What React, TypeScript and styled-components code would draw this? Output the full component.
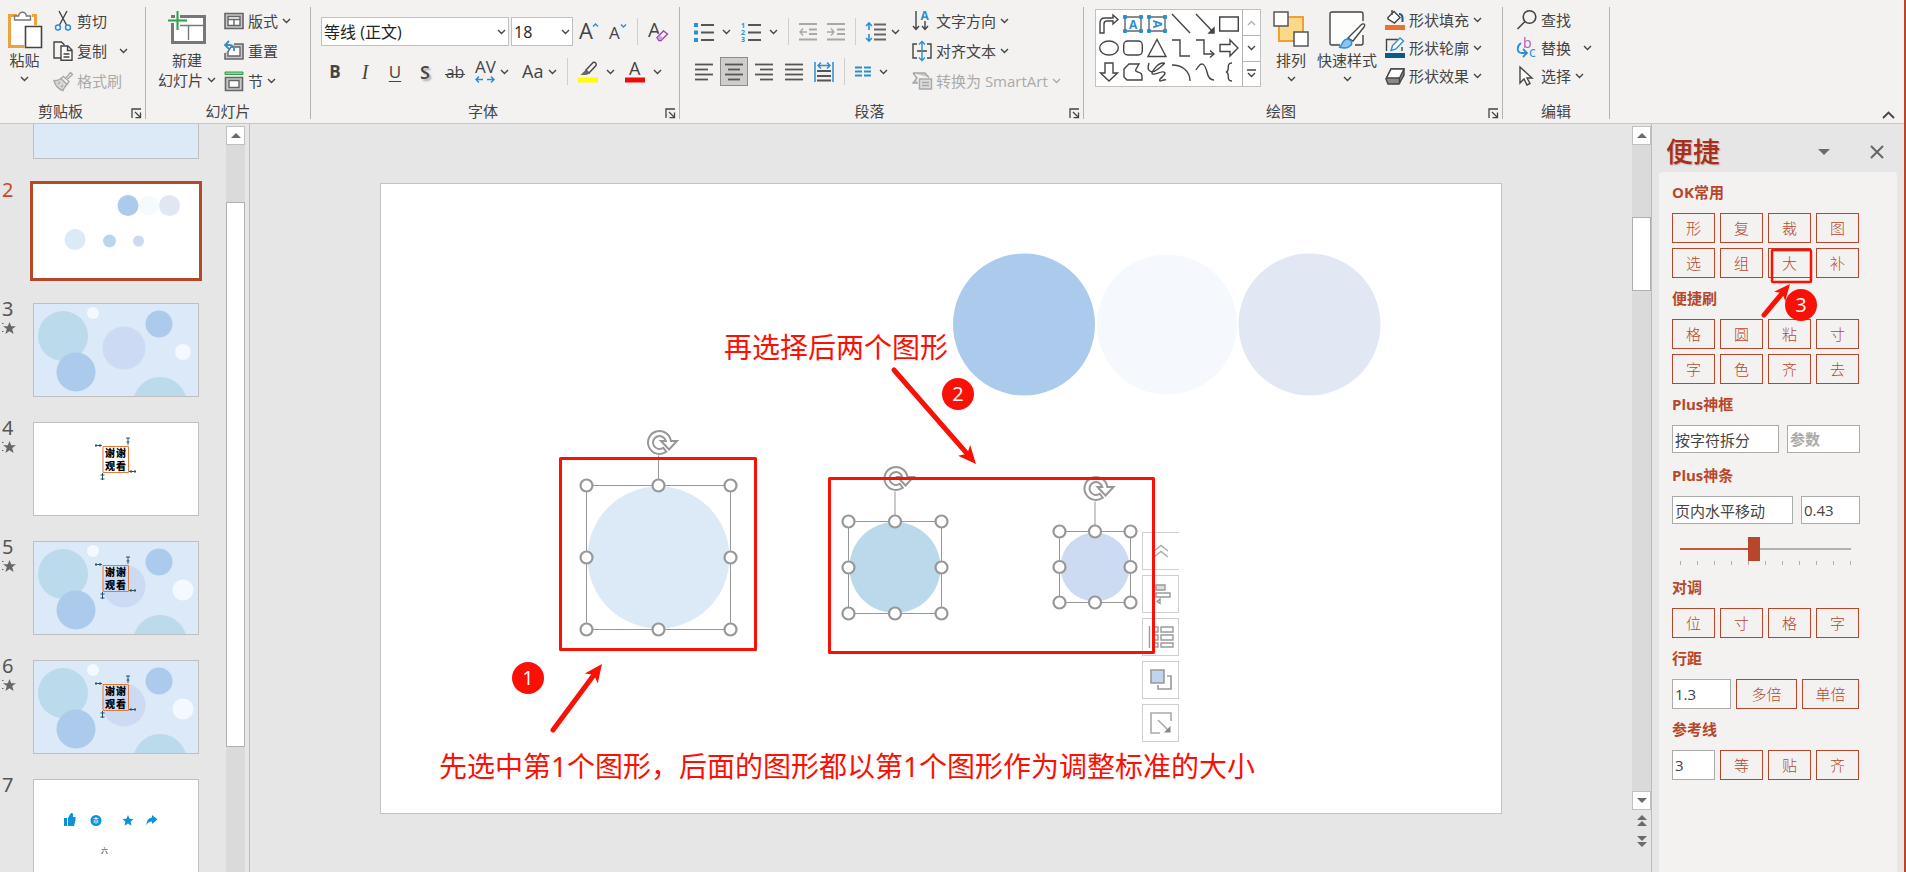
import React, { useState } from 'react';
import styled, { createGlobalStyle, css } from 'styled-components';

const ink = '#444444';
const accent = '#b7472a';
const blue = '#2b8fd0';
const mark = '#fb1006';

const GlobalStyle = createGlobalStyle`
  *, *::before, *::after { box-sizing: border-box; }
  body {
    margin: 0;
    overflow: hidden;
    background: #e6e6e6;
    color: ${ink};
    font: 15px/20px "Open Sans", "Noto Sans CJK SC", sans-serif;
  }
  button, input, select { font: inherit; color: inherit; }
  button { padding: 0; border: 0; background: none; cursor: pointer; white-space: nowrap; }
  svg { display: block; flex: none; overflow: visible; }
`;

const Shell = styled.div`
  display: flex;
  flex-direction: column;
  height: 100vh;
  border-right: 2px solid ${accent};
`;

/* ---------- Ribbon ---------- */

const RibbonBar = styled.header`
  display: flex;
  flex: none;
  padding: 7px 0 4px;
  background: #f3f2f1;
  border-bottom: 1px solid #c8c6c4;
`;

const GroupBox = styled.section<{ $width: number }>`
  flex: none;
  display: flex;
  flex-direction: column;
  width: ${p => p.$width}px;
  border-right: 1px solid #b5b3b1;
`;

const GroupBody = styled.div<{ $pad: number }>`
  display: flex;
  height: 96px;
  padding-left: ${p => p.$pad}px;
`;

const GroupFooter = styled.div<{ $launcher?: boolean }>`
  position: relative;
  height: 16px;
  padding-right: ${p => (p.$launcher ? 24 : 0)}px;
  line-height: 16px;
  text-align: center;
`;

const Launcher = styled.button`
  position: absolute;
  right: 3px;
  top: 5px;
`;

const BigButton = styled.button<{ $width: number }>`
  display: flex;
  flex-direction: column;
  align-items: center;
  width: ${p => p.$width}px;
  height: 84px;
  padding-top: 4px;
  line-height: 20px;
  & > svg:last-child { margin-top: 6px; }
`;

const BigIcon = styled.span`
  display: block;
  height: 39px;
`;

const WithChevron = styled.span`
  display: flex;
  align-items: center;
  gap: 4px;
`;

const MenuColumn = styled.div<{ $row: number }>`
  display: grid;
  grid-auto-rows: ${p => p.$row}px;
  align-content: start;
  justify-items: start;
`;

const MenuButton = styled.button<{ $wide?: boolean }>`
  display: flex;
  align-items: center;
  gap: 4px;
  padding: 0 4px 2px;
  & > svg:last-child { margin-left: ${p => (p.$wide ? 8 : 0)}px; }
  &:disabled { color: #aaaaaa; }
`;

const ToolRows = styled.div<{ $width?: number }>`
  display: flex;
  flex-direction: column;
  gap: 11px;
  padding-top: 10px;
  ${p => p.$width && css`width: ${p.$width}px;`}
`;

const ToolRow = styled.div`
  display: flex;
  align-items: center;
  gap: 2px;
  height: 29px;
`;

const Tool = styled.button<{ $gap?: number }>`
  display: flex;
  align-items: center;
  gap: ${p => p.$gap ?? 8}px;
  height: 29px;
  padding: 0 4px;
  &:disabled { opacity: 0.6; }
`;

const ToggleTool = styled.button<{ $on?: boolean }>`
  display: grid;
  place-items: center;
  width: 28px;
  height: 29px;
  border: 1px solid ${p => (p.$on ? '#8c8c8c' : 'transparent')};
  background: ${p => (p.$on ? '#cfcdcb' : 'none')};
`;

const Letter = styled.span<{ $kind: 'b' | 'i' | 'u' | 's' | 'ab' }>`
  font-size: 17px;
  line-height: 20px;
  ${p => p.$kind === 'b' && css`font-weight: 700;`}
  ${p => p.$kind === 'i' && css`font-family: "Liberation Serif", serif; font-style: italic; font-size: 20px;`}
  ${p => p.$kind === 'u' && css`text-decoration: underline; text-underline-offset: 3px;`}
  ${p => p.$kind === 's' && css`font-size: 18px; font-weight: 600; text-shadow: 2px 2px 2px #aaa;`}
  ${p => p.$kind === 'ab' && css`
    padding: 0 1px;
    font-size: 16px;
    background: linear-gradient(${ink}, ${ink}) center 12px / 100% 1px no-repeat;
  `}
`;

const Divider = styled.span`
  width: 1px;
  height: 27px;
  margin: 0 4px;
  background: #d0cecc;
`;

const Combo = styled.label<{ $width: number }>`
  position: relative;
  display: block;
  width: ${p => p.$width}px;
  height: 29px;
  & > svg { position: absolute; right: 3px; top: 12px; pointer-events: none; }
`;

const ComboSelect = styled.select`
  appearance: none;
  width: 100%;
  height: 100%;
  padding: 0 2px;
  border: 1px solid #c2c0be;
  border-radius: 0;
  background: #fff;
  color: #222;
  font-size: 16px;
`;

const Gallery = styled.div`
  display: flex;
  width: 166px;
  height: 78px;
  margin: 2px 8px 0 0;
  border: 1px solid #c2c0be;
  background: #fff;
`;

const ShapeGrid = styled.div`
  flex: 1;
  display: grid;
  grid-template: repeat(3, 24px) / repeat(6, 24px);
  padding: 2px 0 0 1px;
`;

const ShapeCell = styled.button`
  display: grid;
  place-items: center;
`;

const GalleryScroll = styled.div`
  display: grid;
  grid-template-rows: repeat(3, 1fr);
  width: 18px;
  background: #fff;
  & > button { display: grid; place-items: center; border-left: 1px solid #b5b3b1; }
  & > button + button { border-top: 1px solid #b5b3b1; }
`;

const CollapseButton = styled.button`
  align-self: flex-end;
  margin: 0 9px 0 auto;
`;

/* ---------- Workspace ---------- */

const Workspace = styled.div`
  flex: 1;
  min-height: 0;
  display: flex;
`;

const ThumbPane = styled.nav`
  flex: none;
  display: flex;
  width: 250px;
  padding-right: 4px;
  border-right: 1px solid #bcbcbc;
`;

const ThumbList = styled.ol`
  flex: 1;
  display: flex;
  flex-direction: column;
  gap: 25px;
  margin: 0;
  padding: 0;
  list-style: none;
  overflow: hidden;
`;

const ThumbItem = styled.li`
  flex: none;
  display: flex;
`;

const ThumbInfo = styled.div<{ $active?: boolean }>`
  width: 33px;
  padding-left: 2px;
  font-family: "Noto Sans", sans-serif;
  font-size: 20px;
  line-height: 12px;
  color: ${p => (p.$active ? '#c8492c' : '#555')};
  & > svg { margin-top: 7px; }
`;

const Thumb = styled.button<{ $active?: boolean; $clipped?: boolean }>`
  display: block;
  width: 166px;
  height: ${p => (p.$clipped ? 35 : 94)}px;
  border: 1px solid #bfbfbf;
  border-top-width: ${p => (p.$clipped ? 0 : 1)}px;
  background: ${p => (p.$clipped ? '#dce9f7' : '#fff')};
  overflow: hidden;
  ${p => p.$active && css`border-color: #fff; box-shadow: 0 0 0 3px ${accent};`}
  & > svg { overflow: hidden; }
`;

const ScrollTrack = styled.div`
  flex: none;
  display: flex;
  flex-direction: column;
  width: 19px;
  padding-top: 2px;
`;

const ScrollButton = styled.button<{ $plain?: boolean }>`
  flex: none;
  display: grid;
  place-items: center;
  height: ${p => (p.$plain ? 21 : 19)}px;
  border: ${p => (p.$plain ? 0 : 1)}px solid #c0c0c0;
  background: ${p => (p.$plain ? 'none' : '#fff')};
`;

const ScrollSpace = styled.div<{ $grow: number }>`
  flex: ${p => p.$grow} 1 0;
  background: #dadada;
`;

const ScrollThumb = styled.div<{ $grow: number }>`
  flex: ${p => p.$grow} 1 0;
  border: 1px solid #b0b0b0;
  background: #fff;
`;

const ScrollFoot = styled.div`
  flex: none;
  height: 20px;
`;

const EditorPane = styled.main`
  flex: 1;
  min-width: 0;
  display: grid;
  place-items: center;
`;

const Slide = styled.div`
  position: relative;
  width: 1122px;
  height: 631px;
  border: 1px solid #c3c3c3;
  background: #fff;
`;

const SlideDrawing = styled.svg`
  position: absolute;
  left: 0;
  top: 0;
  pointer-events: none;
`;

const Note = styled.p<{ $x: number; $y: number }>`
  position: absolute;
  left: ${p => p.$x}px;
  top: ${p => p.$y}px;
  margin: 0;
  color: ${mark};
  font-family: "Noto Sans", "Noto Sans CJK SC", sans-serif;
  font-size: 28px;
  line-height: 36px;
  white-space: nowrap;
`;

const Badge = styled.span<{ $x: number; $y: number }>`
  position: absolute;
  left: ${p => p.$x}px;
  top: ${p => p.$y}px;
  z-index: 2;
  width: 32px;
  height: 32px;
  border-radius: 50%;
  background: ${mark};
  color: #fff;
  font-size: 20px;
  font-weight: 400;
  line-height: 32px;
  text-align: center;
`;

const FloatTools = styled.div`
  position: absolute;
  left: 761px;
  top: 348px;
  display: grid;
  gap: 5px;
`;

const FloatButton = styled.button<{ $open?: boolean }>`
  display: grid;
  place-items: center;
  width: 37px;
  height: 38px;
  border: 1px solid #cfcfcf;
  border-right-width: ${p => (p.$open ? 0 : 1)}px;
  background: #fff;
`;

/* ---------- Side panel ---------- */

const SidePanel = styled.aside`
  flex: none;
  display: flex;
  flex-direction: column;
  width: 253px;
  padding: 0 7px;
  border-left: 1px solid #bcbcbc;
`;

const PanelHeader = styled.div`
  display: flex;
  align-items: center;
  height: 48px;
  padding: 8px 13px 0 7px;
`;

const PanelTitle = styled.h2`
  flex: 1;
  margin: 0;
  color: #a5301f;
  font-size: 27px;
  font-weight: 500;
  line-height: 34px;
  text-shadow: 1px 1px 1px #c9a9a2;
`;

const PanelHeadButton = styled.button`
  width: 14px;
  margin-left: 38px;
`;

const PanelBody = styled.div`
  flex: 1;
  display: flex;
  flex-direction: column;
  gap: 11px;
  padding: 11px 37px 0 13px;
  border-radius: 4px 4px 0 0;
  background: #f3f2f1;
`;

const Section = styled.section`
  display: grid;
  gap: 10px;
`;

const SectionTitle = styled.h3`
  height: 20px;
  margin: 0;
  color: ${accent};
  font-size: 15px;
  font-weight: 700;
  line-height: 18px;
`;

const ButtonGrid = styled.div`
  display: grid;
  grid-template-columns: repeat(4, 43px);
  gap: 5px;
`;

const FieldRow = styled.div`
  display: flex;
  align-items: flex-start;
  gap: 5px;
  height: 30px;
`;

const PanelButton = styled.button<{ $width?: number }>`
  position: relative;
  width: ${p => p.$width ?? 43}px;
  height: 30px;
  border: 1px solid ${accent};
  color: ${accent};
  font-weight: 300;
  line-height: 26px;
`;

const Field = styled.input<{ $width: number; $tall?: boolean; $end?: boolean }>`
  width: ${p => p.$width}px;
  height: ${p => (p.$tall ? 30 : 28)}px;
  margin-left: ${p => (p.$end ? 'auto' : 0)};
  padding: 0 2px;
  border: 1px solid #ababab;
  border-radius: 0;
  background: #fff;
  &::placeholder { color: #aaa; font-weight: 700; }
`;

const SliderBox = styled.div`
  height: 41px;
  margin-top: -11px;
  padding: 11px 8px 0;
`;

const Slider = styled.input<{ $pct: number }>`
  display: block;
  appearance: none;
  width: 171px;
  height: 24px;
  margin: 0;
  background: none;
  &::-webkit-slider-runnable-track {
    height: 2px;
    background: linear-gradient(to right, #c8553a ${p => p.$pct}%, #b0b0b0 ${p => p.$pct}%);
  }
  &::-webkit-slider-thumb {
    appearance: none;
    width: 12px;
    height: 24px;
    margin-top: -11px;
    background: ${accent};
  }
`;

const Ticks = styled.div`
  display: flex;
  justify-content: space-between;
  width: 171px;
  & > i { width: 1px; height: 4px; background: #b0b0b0; }
`;

const Pointer = styled.svg`
  position: absolute;
  left: -12px;
  top: -4px;
  z-index: 1;
  pointer-events: none;
`;

/* ---------- Icons ---------- */

type IconProps = { w?: number; h?: number; children: React.ReactNode; color?: string; sw?: number };
const Icon = ({ w = 20, h = 20, color = ink, sw = 1.4, children }: IconProps) => (
  <svg width={w} height={h} viewBox={`0 0 ${w} ${h}`} fill="none" stroke={color} strokeWidth={sw} aria-hidden="true">
    {children}
  </svg>
);

const Chevron = ({ color = ink }: { color?: string }) => (
  <Icon w={9} h={6} color={color}><path d="M1 1l3.500 3.500L8 1" /></Icon>
);

const LauncherIcon = () => (
  <Icon w={11} h={11} sw={1.3}><path d="M1 10V1h9M4 4l5.500 5.500M9.500 4.500v5.200H4.500" /></Icon>
);

const G = ({ x, y, s, fill = ink, children, bold }: { x: number; y: number; s: number; fill?: string; bold?: boolean; children: string }) => (
  <text x={x} y={y} fontSize={s} fill={fill} stroke="none" fontWeight={bold ? 700 : 400} fontFamily="Open Sans, sans-serif">{children}</text>
);

const PasteIcon = () => (
  <Icon w={36} h={38}>
    <path d="M10 4.500H2.500v31H17M25 4.500h3.500V14" stroke="#eda33c" strokeWidth="3" fill="none" />
    <path d="M4 6h23v28H4z" fill="#fff" stroke="none" />
    <path d="M7.500 9V5h4.200a3.800 3.800 0 0 1 7.600 0h4.200v4z" fill="#fff" stroke="#777" />
    <path d="M18.500 15.500h16v21h-16z" fill="#fff" strokeWidth="1.600" />
  </Icon>
);

const CutIcon = () => (
  <Icon>
    <path d="M6 0l7.500 14M14 0L6.500 14" />
    <circle cx="5" cy="16.500" r="2.500" stroke={blue} /><circle cx="15" cy="16.500" r="2.500" stroke={blue} />
  </Icon>
);

const CopyIcon = () => (
  <Icon>
    <path d="M8 17H1V1h7.500l3 3" />
    <path d="M8 5h7l4 4v10.300H8z" fill="#fff" /><path d="M14.500 5v4.500H19M10.500 13h6M10.500 16h6" />
  </Icon>
);

const BrushIcon = () => (
  <Icon color="#a8a8a8">
    <path d="M1 9.500c3 .5 5-.5 7-2l6 6c-2 2-3.500 4-4 6C5 18 2 14 1 9.500z" fill="#d8d8d8" />
    <path d="M8 7.500l2.500-2 2 2L17.500 1.500l2 2-5.500 5 2 2-2 3M5 13l2-2M8 16l2-2" />
  </Icon>
);

const NewSlideIcon = () => (
  <Icon w={38} h={38} color="#777">
    <path d="M4.500 5.500h32v26h-32z" strokeWidth="3" /><path d="M6 7h29v23H6z" fill="#fff" stroke="none" />
    <path d="M7 14.500h28M20.500 14.500V29" />
    <path d="M9.500 0v19M0 9.500h19" stroke="#f3f2f1" strokeWidth="5" />
    <path d="M9.500 0v19M0 9.500h19" stroke="#2ea04f" strokeWidth="2" />
  </Icon>
);

const LayoutIcon = () => (
  <Icon color="#666"><path d="M1 2.500h18v15H1z" fill="#c8c8c8" strokeWidth="1.600" /><path d="M4 5.500h12v9H4z" fill="#fff" /><path d="M4 8.500h12M10 8.500v6" /></Icon>
);

const ResetIcon = () => (
  <Icon color="#666">
    <path d="M10 3h9v15H1v-6" fill="#c8c8c8" strokeWidth="1.600" /><path d="M7 6h9v9H4v-4z" fill="#fff" />
    <path d="M5 0L1 4l4 4M1 4h4.500c3.500 0 5 3 4.500 6" stroke={blue} strokeWidth="1.800" />
  </Icon>
);

const SectionIcon = () => (
  <Icon color="#666">
    <path d="M1 1h18v2.500H1z" fill="#8fcf9f" stroke="#2ea04f" strokeWidth="1" />
    <path d="M1.500 6.500h17v13h-17z" fill="#c8c8c8" strokeWidth="1.600" /><path d="M5 9.500h10v7H5z" fill="#fff" />
  </Icon>
);

const GrowIcon = () => (<Icon><G x={0} y={17} s={22}>A</G><path d="M14 4.500l2.500-2.500L19 4.500" stroke={blue} /></Icon>);
const ShrinkIcon = () => (<Icon w={18}><G x={0} y={17} s={17}>A</G><path d="M12 2.500L14.500 5 17 2.500" stroke={blue} /></Icon>);
const ClearIcon = () => (
  <Icon><G x={0} y={15} s={20}>A</G><path d="M9 15.500L15.500 9l4 3-6.500 6.500H11z" fill="#fff" stroke="#f3f2f1" strokeWidth="3" /><path d="M9 15.500L15.500 9l4 3-6.500 6.500H11z" fill="#fff" stroke="#a33fb0" /><path d="M9.500 15.500l2.500-2.500 3 3-2 2h-2z" fill="#d9a0e0" stroke="none" /></Icon>
);
const SpacingIcon = () => (<Icon h={22}><G x={0} y={12} s={17}>AV</G><path d="M1 18.500h7M12 18.500h7M4 15.500l-3 3 3 3M16 15.500l3 3-3 3" stroke={blue} /></Icon>);
const CaseIcon = () => (<Icon w={24} h={22}><G x={3} y={17} s={18}>Aa</G></Icon>);
const HighlightIcon = () => (
  <Icon h={22}><path d="M8 9l7-7.500c2-1 4 1 3 3l-7 7.500z" /><path d="M8 8.500l4 4-4 1.500H2.500z" fill="#666" stroke="none" /><path d="M0 16.500h20v5H0z" fill="#ffff00" stroke="none" /></Icon>
);
const FontColorIcon = () => (<Icon h={22}><G x={4} y={14} s={18}>A</G><path d="M0 16.500h20v5H0z" fill="#e80c0c" stroke="none" /></Icon>);

const BulletsIcon = () => (
  <Icon color="#555" sw={2}><path d="M7 3h13M7 10.500h13M7 18h13" /><path d="M0 1h4v4H0zM0 8.500h4v4H0zM0 16h4v4H0z" fill={blue} stroke="none" /></Icon>
);
const NumberingIcon = () => (
  <Icon color="#555" sw={2}><path d="M7 3h13M7 10.500h13M7 18h13" /><G x={0} y={6} s={7} fill={blue} bold>1</G><G x={0} y={13} s={7} fill={blue} bold>2</G><G x={0} y={20} s={7} fill={blue} bold>3</G></Icon>
);
const IndentIcon = ({ out }: { out?: boolean }) => (
  <Icon w={18} color="#777" sw={1.8}>
    <path d="M0 2h18M10 7.500h8M10 12h8M0 17.500h18" />
    <path d={out ? 'M8 10H1M4 6.500L1 10l3 3.500' : 'M0 10h7M4 6.500L7 10l-3 3.500'} strokeWidth="1.300" />
  </Icon>
);
const LineSpacingIcon = () => (
  <Icon color="#666" sw={2}><path d="M8 2.500h12M8 7.500h12M8 12.500h12M8 17.500h12" /><path d="M3 1v7M0 4l3-3 3 3M3 12v7M0 16l3 3 3-3" stroke={blue} strokeWidth="1.600" /></Icon>
);
const AlignIcon = ({ lines }: { lines: [number, number][] }) => (
  <Icon w={18} h={18} color="#555" sw={1.8}>{lines.map(([a, b], i) => <path key={i} d={`M${a} ${1.5 + i * 5}H${b}`} />)}</Icon>
);
const DistributeIcon = () => (
  <Icon color="#555" sw={1.8}><path d="M3 9h14M3 14h14M3 18.500h14" /><path d="M1 0v20M19 0v20M4 3.500h12M7 .5l-3 3 3 3M13 .5l3 3-3 3" stroke={blue} strokeWidth="1.500" /></Icon>
);
const ColumnsIcon = () => (<Icon w={16} h={12} color={blue} sw={1.8}><path d="M0 1.500h7M0 5.500h7M0 9.500h7M9 1.500h7M9 5.500h7M9 9.500h7" /></Icon>);
const DirectionIcon = () => (
  <Icon><path d="M4 0v18M1 15l3 3.500L7 15M13 10v8M10 15l3 3.500 3-3.500" /><G x={8.500} y={9} s={12} fill={blue} bold>A</G></Icon>
);
const AlignTextIcon = () => (
  <Icon><path d="M5 3H1v14h4M15 3h4v14h-4M5 10h10" /><path d="M10 0v20M7 3.500L10 .5l3 3M7 16.500l3 3 3-3" stroke={blue} /></Icon>
);
const SmartArtIcon = () => (
  <Icon color="#a8a8a8"><path d="M1 2h12l4 4.500M1 2l4 5-4 5h5" fill="#c8c8c8" /><path d="M7.500 8h12v10h-12z" fill="#ddd" /><path d="M10 11.500h7M10 14.500h7" /></Icon>
);

const ArrangeIcon = () => (
  <Icon w={36} h={38} color="#555" sw={1.5}>
    <path d="M6 6h24v24H6z" fill="#fbd98b" stroke="#f0a030" strokeWidth="2" />
    <path d="M1 1h14v14H1zM21 21h14v14H21z" fill="#fff" />
  </Icon>
);
const QuickStyleIcon = () => (
  <Icon w={38} h={40}>
    <path d="M2.700 2h31.500v30H2.700z" fill="#fff" stroke="none" opacity="0.8" />
    <path d="M12 34H4c-1.500 0-2-.5-2-2V3c0-1.500.5-2 2-2h29c1.500 0 2 .5 2 2v7M35 24v8c0 1.500-.5 2-2 2h-6" fill="none" />
    <path d="M20 27L33 14c2-2 5-1 3 2L25 30z" fill="#fff" />
    <path d="M11 36c4 0 2-8 9-8 4 1 5 5 2 7-3 3-8 2-11 1z" fill="#8cc4f0" stroke={blue} />
  </Icon>
);
const FillIcon = () => (
  <Icon><path d="M3 7.500l6-6 6 6-5.500 5.500L3 9zM7 0v5" fill="#fff" /><path d="M14 4c3 0 4 2 3.500 8" stroke="#135e8a" strokeWidth="2" /><path d="M0 15h20v5H0z" fill="#e97132" stroke="none" /></Icon>
);
const OutlineIcon = () => (
  <Icon><path d="M13 1.500H1.500V13M17 9v4" /><path d="M6 12.500l1.500-5L15 0l3.500 3L11 11z" fill="#fff" stroke={blue} /><path d="M0 15h20v5H0z" fill="#0b5c82" stroke="none" /></Icon>
);
const EffectIcon = () => (
  <Icon><path d="M1 13L6 3h13v6l-5 9H3z" fill="#8a8a8a" /><path d="M6 3h13l-4.500 9H1.500z" fill="#fff" /><path d="M14.500 12v6" /></Icon>
);
const FindIcon = () => (<Icon sw={1.6}><circle cx="12.500" cy="7" r="6.300" /><path d="M8 11.500L.5 19" /></Icon>);
const ReplaceIcon = () => (
  <Icon><G x={6} y={10} s={14} fill="#b157c0">b</G><G x={12} y={19} s={14} fill={blue}>c</G><path d="M4 5c-5 4-4 10 1 10h4M6 11l4 4-4 4" stroke={blue} strokeWidth="1.800" /></Icon>
);
const SelectIcon = () => (<Icon><path d="M3 1v16l4-4 3 6 3-1.500-3-5.500h5z" fill="#fff" /></Icon>);

const TextBoxShape = ({ turned }: { turned?: boolean }) => (
  <>
    <path d="M2 3h16v14H2z" />
    <path d="M.5 1.500h3v3h-3zM16.500 1.500h3v3h-3zM.5 15.500h3v3h-3zM16.500 15.500h3v3h-3z" fill={blue} stroke={blue} strokeWidth="1" />
    <g transform={turned ? 'rotate(90 10 10)' : undefined}><G x={6} y={14.500} s={12} fill={blue} bold>A</G></g>
  </>
);

const shapes: { name: string; art: React.ReactNode }[] = [
  { name: '圆角右箭头', art: <path d="M1 19V9c0-4 2-5 5-5h8V1l5 4.500-5 4.500V7H8C6 7 5 8 5 10v9z" /> },
  { name: '文本框', art: <TextBoxShape /> },
  { name: '竖排文本框', art: <TextBoxShape turned /> },
  { name: '直线', art: <path d="M1 0l18 19" /> },
  { name: '直线箭头', art: <><path d="M1 0l18 19" /><path d="M19 14v5h-5z" fill={ink} /></> },
  { name: '矩形', art: <path d="M.7 3h18.600v14H.7z" /> },
  { name: '椭圆', art: <ellipse cx="10" cy="10" rx="9.300" ry="7" /> },
  { name: '圆角矩形', art: <rect x=".7" y="3" width="18.600" height="14" rx="4" /> },
  { name: '等腰三角形', art: <path d="M10 1.500l9 17H1z" /> },
  { name: '肘形连接符', art: <path d="M1 2h8v16h10" /> },
  { name: '肘形箭头连接符', art: <><path d="M1 2h8v14h9" /><path d="M15 12.500l4 3.500-4 3.500" /></> },
  { name: '右箭头', art: <path d="M1 6.500h10V2l8 8-8 8v-4.500H1z" /> },
  { name: '下箭头', art: <path d="M6 1h8v10h4.500L10 19l-8.500-8H6z" /> },
  { name: '任意多边形', art: <path d="M1 7l5-5h10l-3 5c-2 5 6 1 6 7v4H4l-3-3z" /> },
  { name: '自由曲线', art: <path d="M2 1c-3 9 3 11 9 6 6-5 8-6 5-6-5 0-10 7-11 10 0 4 12-4 13 0 0 3-7 6-5 8 2 0 4-2 6-1" /> },
  { name: '弧形', art: <path d="M1 3c10 0 18 6 18 16" /> },
  { name: '曲线', art: <path d="M1 8C7-3 10 3 12 10c1 5 4 8 7 8" /> },
  { name: '左大括号', art: <path d="M13 1c-7 0-1 8-6 9 5 1-1 9 6 9" /> },
];

const Tri = ({ up, double }: { up?: boolean; double?: boolean }) => (
  <svg width="10" height={double ? 11 : 5} viewBox={`0 0 10 ${double ? 11 : 5}`} fill="#6b6b6b" aria-hidden="true">
    <path d={up ? 'M0 5l5-5 5 5z' : 'M0 0l5 5 5-5z'} />
    {double && <path d={up ? 'M0 11l5-5 5 5z' : 'M0 6l5 5 5-5z'} />}
  </svg>
);

const StarIcon = () => (
  <svg width="14" height="13" viewBox="0 0 14 13" fill="#666" aria-hidden="true">
    <path d="M7.500 0l1.700 4.300H14l-3.800 2.800L11.600 12 7.500 9.200 3.400 12l1.400-4.900L1 4.300h4.800zM0 1h1.500v1H0zM0 9h1.500v1H0z" />
  </svg>
);

/* ---------- Slide thumbnails ---------- */

const Bubbles = ({ dot = 10.5 }: { dot?: number }) => (
  <>
    <rect width="164" height="92" fill="#dce9f8" />
    <circle cx="29" cy="32" r="25" fill="#bbdaeb" />
    <circle cx="42" cy="68" r="19.500" fill="#accbec" />
    <circle cx="59" cy="9" r="6" fill="#f3f9fe" />
    <circle cx="90" cy="44" r="21.500" fill="#ccdaf3" />
    <circle cx="125" cy="20" r="13.500" fill="#accbec" />
    <circle cx="149" cy="48" r={dot} fill="#f3f9fe" />
    <circle cx="126" cy="100" r="27" fill="#bbdaeb" />
  </>
);

const Thanks = () => (
  <>
    <path d="M69 23.500h25.500v26H69z" fill="none" stroke="#e07b39" />
    <g fontSize="10" fontWeight="900" fontFamily="Noto Sans CJK SC, sans-serif" fill="#000">
      <text x="71" y="34">谢</text>
      <text x="82" y="34">谢</text>
      <text x="71" y="47">观</text>
      <text x="82" y="47">看</text>
    </g>
    <path d="M61 22.500h7M62 21v3M66 21v3M94 15v7M92 15h4M92.500 19h3M95 48.500h7M97 47v3M101 47v3M68.500 50v7M66.500 52h4M66.500 56h4" stroke="#1f5673" fill="none" />
  </>
);

const ActionIcons = () => (
  <>
    <g fill="#0a93d9">
      <path d="M30 38h3v8h-3zM34 38l3-5c2-.5 2.500 1 2 4h2.500v3l-1.500 6H34z" />
      <circle cx="62" cy="40.500" r="5.500" />
      <path d="M94 35l1.600 3.700 4 .4-3 2.600.9 4-3.500-2.100-3.500 2.100.9-4-3-2.600 4-.4z" />
      <path d="M118 35l5.500 4.500L118 44v-2.500c-3 0-4.500 1-5.500 4 0-5 2-7.500 5.500-8z" />
    </g>
    <path d="M59.500 38.500h5M62 37v7M60 43l.5-3M64 43l-.5-3" stroke="#fff" strokeWidth=".8" fill="none" />
    <text x="67" y="73" fontSize="7" fill="#222" fontFamily="Noto Sans CJK SC, sans-serif">六</text>
  </>
);

const CirclesThumb = () => (
  <>
    <circle cx="94" cy="20.500" r="10.500" fill="#accbec" />
    <circle cx="115" cy="20.500" r="10" fill="#f5fafd" />
    <circle cx="135.500" cy="20.500" r="10.500" fill="#e0e7f3" />
    <circle cx="41" cy="54.500" r="10.500" fill="#dce9f6" />
    <circle cx="75.500" cy="56" r="6.500" fill="#b9d6ec" />
    <circle cx="104.500" cy="56" r="5.500" fill="#cdd9ec" />
  </>
);

const thumbs: { n: number; art?: React.ReactNode; star?: boolean }[] = [
  { n: 1 },
  { n: 2, art: <CirclesThumb /> },
  { n: 3, art: <Bubbles dot={8} />, star: true },
  { n: 4, art: <Thanks />, star: true },
  { n: 5, art: <><Bubbles /><Thanks /></>, star: true },
  { n: 6, art: <><Bubbles /><Thanks /></>, star: true },
  { n: 7, art: <ActionIcons /> },
];

/* ---------- Slide drawing ---------- */

const Arrow = ({ x1, y1, x2, y2, head = 18 }: { x1: number; y1: number; x2: number; y2: number; head?: number }) => {
  const angle = (Math.atan2(y2 - y1, x2 - x1) * 180) / Math.PI;
  const len = Math.hypot(x2 - x1, y2 - y1);
  return (
    <g transform={`translate(${x1} ${y1}) rotate(${angle})`} fill={mark}>
      <path d={`M0 0H${len - head + 4}`} stroke={mark} strokeWidth="5" strokeLinecap="round" />
      <path d={`M${len} 0L${len - head} ${-head * 0.45}L${len - head * 0.75} 0L${len - head} ${head * 0.45}z`} />
    </g>
  );
};

const Selection = ({ x, y, w, h, fill }: { x: number; y: number; w: number; h: number; fill: string }) => {
  const cx = x + w / 2;
  const cy = y + h / 2;
  const handles = [[x, y], [cx, y], [x + w, y], [x, cy], [x + w, cy], [x, y + h], [cx, y + h], [x + w, y + h]];
  return (
    <g fill="none" stroke="#979797">
      <circle cx={cx} cy={cy} r={w / 2 - 1} fill={fill} stroke="none" />
      <path d={`M${x} ${y}h${w}v${h}h${-w}zM${cx} ${y}v-30`} />
      {handles.map(([a, b]) => <circle key={`${a}-${b}`} cx={a} cy={b} r="6" fill="#fff" strokeWidth="2.200" />)}
      <path
        transform={`translate(${cx + 1} ${y - 43})`}
        d="M6.800 9.200A11.500 11.500 0 1 1 11.400-1.500H17.500L9.500 7 1.500-1.500H6.300A6.500 6.500 0 1 0 3.800 5.300z"
        fill="#fff"
        strokeWidth="2"
      />
    </g>
  );
};

/* ---------- Screen ---------- */

const Group = ({ name, width, pad = 10, launcher, children }: { name: string; width: number; pad?: number; launcher?: boolean; children: React.ReactNode }) => (
  <GroupBox $width={width} aria-label={name}>
    <GroupBody $pad={pad}>{children}</GroupBody>
    <GroupFooter $launcher={launcher}>
      {name}
      {launcher && <Launcher aria-label={`${name}设置`}><LauncherIcon /></Launcher>}
    </GroupFooter>
  </GroupBox>
);

const Ribbon = () => (
  <RibbonBar>
    <Group name="剪贴板" width={146} pad={0} launcher>
      <BigButton $width={49}><BigIcon><PasteIcon /></BigIcon>粘贴<Chevron /></BigButton>
      <MenuColumn $row={30}>
        <MenuButton><CutIcon />剪切</MenuButton>
        <MenuButton $wide><CopyIcon />复制<Chevron /></MenuButton>
        <MenuButton disabled><BrushIcon />格式刷</MenuButton>
      </MenuColumn>
    </Group>

    <Group name="幻灯片" width={165} pad={8}>
      <BigButton $width={66}><BigIcon><NewSlideIcon /></BigIcon>新建<WithChevron>幻灯片<Chevron /></WithChevron></BigButton>
      <MenuColumn $row={30}>
        <MenuButton><LayoutIcon />版式<Chevron /></MenuButton>
        <MenuButton><ResetIcon />重置</MenuButton>
        <MenuButton><SectionIcon />节<Chevron /></MenuButton>
      </MenuColumn>
    </Group>

    <Group name="字体" width={369} launcher>
      <ToolRows>
        <ToolRow>
          <Combo $width={188}><ComboSelect aria-label="字体"><option>等线 (正文)</option></ComboSelect><Chevron /></Combo>
          <Combo $width={62}><ComboSelect aria-label="字号"><option>18</option></ComboSelect><Chevron /></Combo>
          <Tool aria-label="增大字号"><GrowIcon /></Tool>
          <Tool aria-label="减小字号"><ShrinkIcon /></Tool>
          <Divider />
          <Tool aria-label="清除所有格式"><ClearIcon /></Tool>
        </ToolRow>
        <ToolRow>
          <ToggleTool><Letter $kind="b">B</Letter></ToggleTool>
          <ToggleTool><Letter $kind="i">I</Letter></ToggleTool>
          <ToggleTool><Letter $kind="u">U</Letter></ToggleTool>
          <ToggleTool><Letter $kind="s">S</Letter></ToggleTool>
          <ToggleTool><Letter $kind="ab">ab</Letter></ToggleTool>
          <Tool $gap={5} aria-label="字符间距"><SpacingIcon /><Chevron /></Tool>
          <Tool $gap={5} aria-label="更改大小写"><CaseIcon /><Chevron /></Tool>
          <Divider />
          <Tool aria-label="突出显示颜色"><HighlightIcon /><Chevron /></Tool>
          <Tool aria-label="字体颜色"><FontColorIcon /><Chevron /></Tool>
        </ToolRow>
      </ToolRows>
    </Group>

    <Group name="段落" width={404} launcher>
      <ToolRows $width={218}>
        <ToolRow>
          <Tool aria-label="项目符号"><BulletsIcon /><Chevron /></Tool>
          <Tool aria-label="编号"><NumberingIcon /><Chevron /></Tool>
          <Divider />
          <Tool disabled aria-label="降低列表级别"><IndentIcon out /></Tool>
          <Tool disabled aria-label="提高列表级别"><IndentIcon /></Tool>
          <Divider />
          <Tool $gap={5} aria-label="行距"><LineSpacingIcon /><Chevron /></Tool>
        </ToolRow>
        <ToolRow>
          <ToggleTool aria-label="左对齐"><AlignIcon lines={[[0, 18], [0, 13], [0, 18], [0, 13]]} /></ToggleTool>
          <ToggleTool $on aria-label="居中"><AlignIcon lines={[[0, 18], [3, 15], [0, 18], [3, 15]]} /></ToggleTool>
          <ToggleTool aria-label="右对齐"><AlignIcon lines={[[0, 18], [5, 18], [0, 18], [5, 18]]} /></ToggleTool>
          <ToggleTool aria-label="两端对齐"><AlignIcon lines={[[0, 18], [0, 18], [0, 18], [0, 18]]} /></ToggleTool>
          <ToggleTool aria-label="分散对齐"><DistributeIcon /></ToggleTool>
          <Divider />
          <Tool aria-label="分栏"><ColumnsIcon /><Chevron /></Tool>
        </ToolRow>
      </ToolRows>
      <MenuColumn $row={30}>
        <MenuButton><DirectionIcon />文字方向<Chevron /></MenuButton>
        <MenuButton><AlignTextIcon />对齐文本<Chevron /></MenuButton>
        <MenuButton disabled><SmartArtIcon />转换为 SmartArt<Chevron color="#aaa" /></MenuButton>
      </MenuColumn>
    </Group>

    <Group name="绘图" width={419} pad={11} launcher>
      <Gallery>
        <ShapeGrid>
          {shapes.map((s, i) => (
            <ShapeCell key={s.name} aria-label={s.name}>
              <Icon color={i === 1 || i === 2 ? '#666' : ink}>{s.art}</Icon>
            </ShapeCell>
          ))}
        </ShapeGrid>
        <GalleryScroll>
          <button aria-label="上一行"><Icon w={9} h={6} color="#b0b0b0"><path d="M1 5l3.500-3.500L8 5" /></Icon></button>
          <button aria-label="下一行"><Chevron /></button>
          <button aria-label="其他"><Icon w={9} h={9}><path d="M0 1h9M1 4l3.500 3.500L8 4" /></Icon></button>
        </GalleryScroll>
      </Gallery>
      <BigButton $width={44}><BigIcon><ArrangeIcon /></BigIcon>排列<Chevron /></BigButton>
      <BigButton $width={68}><BigIcon><QuickStyleIcon /></BigIcon>快速样式<Chevron /></BigButton>
      <MenuColumn $row={28}>
        <MenuButton><FillIcon />形状填充<Chevron /></MenuButton>
        <MenuButton><OutlineIcon />形状轮廓<Chevron /></MenuButton>
        <MenuButton><EffectIcon />形状效果<Chevron /></MenuButton>
      </MenuColumn>
    </Group>

    <Group name="编辑" width={107}>
      <MenuColumn $row={28}>
        <MenuButton><FindIcon />查找</MenuButton>
        <MenuButton $wide><ReplaceIcon />替换<Chevron /></MenuButton>
        <MenuButton><SelectIcon />选择<Chevron /></MenuButton>
      </MenuColumn>
    </Group>

    <CollapseButton aria-label="折叠功能区"><Icon w={13} h={8} sw={1.8}><path d="M1 7l5.500-5.500L12 7" /></Icon></CollapseButton>
  </RibbonBar>
);

const Thumbnails = () => (
  <ThumbPane aria-label="幻灯片缩略图">
    <ThumbList>
      {thumbs.map(t => (
        <ThumbItem key={t.n}>
          <ThumbInfo $active={t.n === 2}>
            {t.n > 1 && t.n}
            {t.star && <StarIcon />}
          </ThumbInfo>
          <Thumb $active={t.n === 2} $clipped={t.n === 1} aria-label={`幻灯片 ${t.n}`}>
            {t.art && <svg width="164" height="92" viewBox="0 0 164 92">{t.art}</svg>}
          </Thumb>
        </ThumbItem>
      ))}
    </ThumbList>
    <ScrollTrack>
      <ScrollButton aria-label="向上滚动"><Tri up /></ScrollButton>
      <ScrollSpace $grow={57} />
      <ScrollThumb $grow={545} />
      <ScrollSpace $grow={125} />
    </ScrollTrack>
  </ThumbPane>
);

const Editor = () => (
  <EditorPane>
    <Slide>
      <SlideDrawing width="1120" height="629" viewBox="1 0 1120 629">
        <circle cx="644" cy="140.500" r="71" fill="#accbec" />
        <circle cx="787" cy="140.500" r="70" fill="#f5f9fd" />
        <circle cx="929.500" cy="140.500" r="71" fill="#e1e8f4" />
        <Selection x={206.5} y={301.5} w={144} h={144} fill="#dce9f6" />
        <Selection x={468.5} y={337.5} w={93} h={92} fill="#bbd9ea" />
        <Selection x={679.5} y={347.5} w={71} h={71} fill="#ccdaf2" />
      </SlideDrawing>
      <FloatTools>
        <FloatButton $open aria-label="收起"><Icon w={16} h={14} color="#aaa"><path d="M1 7l7-5.500L15 7M1 13l7-5.500 7 5.500" /></Icon></FloatButton>
        <FloatButton aria-label="对齐"><Icon w={20} h={22} color="#999"><path d="M5 2h9v5H5z" fill="#ddd" /><path d="M5 10h14v4H5zM9 16l-3 2.500 3 2z" /></Icon></FloatButton>
        <FloatButton aria-label="排布"><Icon w={26} h={22} color="#999"><path d="M1.500 0v22M5 1h5v5H5zM5 9h5v5H5zM5 17h5v4H5zM13 1h12v5H13zM13 9h12v5H13zM13 17h12v4H13z" /></Icon></FloatButton>
        <FloatButton aria-label="层次"><Icon w={22} h={22} color="#999" sw={1.6}><path d="M1 1h13v13H1z" fill="#c0d4ee" /><path d="M17 7h4v13H8v-4" /></Icon></FloatButton>
        <FloatButton aria-label="尺寸"><Icon w={22} h={22} color="#aaa" sw={1.6}><path d="M21 9V1H1v20h9M8 8l12 12" /><path d="M20.500 14v6.500H14z" fill="#888" stroke="none" /></Icon></FloatButton>
      </FloatTools>
      <SlideDrawing width="1120" height="629" viewBox="1 0 1120 629">
        <g fill="none" stroke={mark} strokeWidth="3" strokeLinejoin="round">
          <rect x="180.500" y="274.500" width="195" height="191" />
          <rect x="449.500" y="294.500" width="324" height="174" />
        </g>
        <Arrow x1={173} y1={546} x2={222} y2={480} />
        <Arrow x1={514} y1={186} x2={596} y2={280} />
      </SlideDrawing>
      <Note $x={343} $y={145}>再选择后两个图形</Note>
      <Note $x={58} $y={564}>先选中第1个图形，后面的图形都以第1个图形作为调整标准的大小</Note>
      <Badge $x={131} $y={478}>1</Badge>
      <Badge $x={561} $y={194}>2</Badge>
    </Slide>
  </EditorPane>
);

const LabeledButtons = ({ labels }: { labels: string[] }) => (
  <ButtonGrid>
    {labels.map(l => (
      <PanelButton key={l}>
        {l}
        {l === '大' && (
          <>
            <Pointer width="80" height="80" viewBox="0 0 80 80">
              <rect x="15" y="5" width="39" height="32" rx="1" fill="none" stroke={mark} strokeWidth="2.500" />
              <Arrow x1={7} y1={70} x2={33} y2={39} head={16} />
            </Pointer>
            <Badge $x={16} $y={40}>3</Badge>
          </>
        )}
      </PanelButton>
    ))}
  </ButtonGrid>
);

const QuickPanel = () => {
  const [amount, setAmount] = useState(0.43);
  return (
    <SidePanel>
      <PanelHeader>
        <PanelTitle>便捷</PanelTitle>
        <PanelHeadButton aria-label="窗格选项"><Icon w={12} h={6}><path d="M0 0h12L6 6z" fill="#6b6b6b" stroke="none" /></Icon></PanelHeadButton>
        <PanelHeadButton aria-label="关闭"><Icon w={14} h={14} color="#666" sw={2}><path d="M1 1l12 12M13 1L1 13" /></Icon></PanelHeadButton>
      </PanelHeader>
      <PanelBody>
        <Section><SectionTitle>OK常用</SectionTitle><LabeledButtons labels={['形', '复', '裁', '图', '选', '组', '大', '补']} /></Section>
        <Section><SectionTitle>便捷刷</SectionTitle><LabeledButtons labels={['格', '圆', '粘', '寸', '字', '色', '齐', '去']} /></Section>
        <Section>
          <SectionTitle>Plus神框</SectionTitle>
          <FieldRow>
            <Field $width={107} aria-label="Plus神框" defaultValue="按字符拆分" />
            <Field $width={73} $end aria-label="参数" placeholder="参数" />
          </FieldRow>
        </Section>
        <Section>
          <SectionTitle>Plus神条</SectionTitle>
          <FieldRow>
            <Field $width={121} aria-label="Plus神条" defaultValue="页内水平移动" />
            <Field $width={59} $end aria-label="数值" value={amount} onChange={e => setAmount(Number(e.target.value) || 0)} />
          </FieldRow>
        </Section>
        <SliderBox>
          <Slider type="range" min={0} max={1} step={0.01} value={amount} $pct={amount * 100} aria-label="数值滑块" onChange={e => setAmount(Number(e.target.value))} />
          <Ticks>{Array.from({ length: 11 }, (_, i) => <i key={i} />)}</Ticks>
        </SliderBox>
        <Section><SectionTitle>对调</SectionTitle><LabeledButtons labels={['位', '寸', '格', '字']} /></Section>
        <Section>
          <SectionTitle>行距</SectionTitle>
          <FieldRow>
            <Field $width={59} $tall aria-label="行距" defaultValue="1.3" />
            <PanelButton $width={61}>多倍</PanelButton>
            <PanelButton $width={57}>单倍</PanelButton>
          </FieldRow>
        </Section>
        <Section>
          <SectionTitle>参考线</SectionTitle>
          <FieldRow>
            <Field $width={43} $tall aria-label="参考线" defaultValue="3" />
            <PanelButton>等</PanelButton>
            <PanelButton>贴</PanelButton>
            <PanelButton>齐</PanelButton>
          </FieldRow>
        </Section>
      </PanelBody>
    </SidePanel>
  );
};

export default function App() {
  return (
    <Shell>
      <GlobalStyle />
      <Ribbon />
      <Workspace>
        <Thumbnails />
        <Editor />
        <ScrollTrack>
          <ScrollButton aria-label="向上滚动"><Tri up /></ScrollButton>
          <ScrollSpace $grow={72} />
          <ScrollThumb $grow={73} />
          <ScrollSpace $grow={502} />
          <ScrollButton aria-label="向下滚动"><Tri /></ScrollButton>
          <ScrollButton $plain aria-label="上一张幻灯片"><Tri up double /></ScrollButton>
          <ScrollButton $plain aria-label="下一张幻灯片"><Tri double /></ScrollButton>
          <ScrollFoot />
        </ScrollTrack>
        <QuickPanel />
      </Workspace>
    </Shell>
  );
}
